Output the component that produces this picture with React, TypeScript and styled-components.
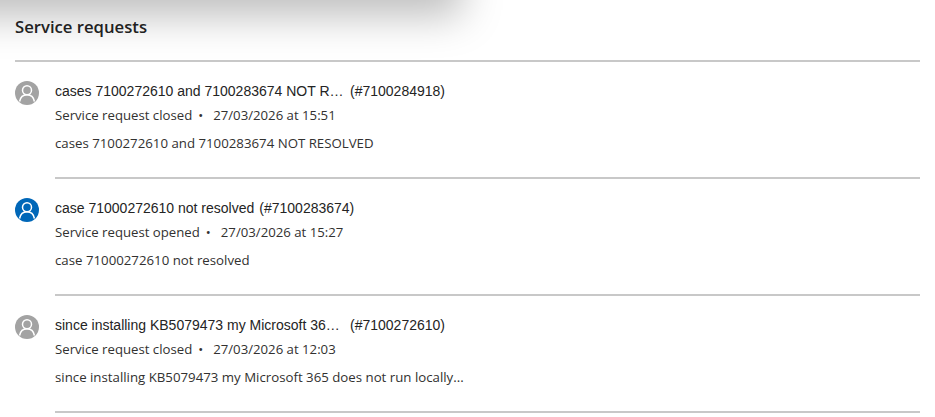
import React from "react";
import styled, { createGlobalStyle } from "styled-components";

interface Request {
  id: string;
  title: string;
  truncated?: boolean;
  status: string;
  date: string;
  body: string;
  active?: boolean;
}

const requests: Request[] = [
  {
    id: "#7100284918",
    title: "cases 7100272610 and 7100283674 NOT R…",
    truncated: true,
    status: "Service request closed",
    date: "27/03/2026 at 15:51",
    body: "cases 7100272610 and 7100283674 NOT RESOLVED",
  },
  {
    id: "#7100283674",
    title: "case 71000272610 not resolved",
    status: "Service request opened",
    date: "27/03/2026 at 15:27",
    body: "case 71000272610 not resolved",
    active: true,
  },
  {
    id: "#7100272610",
    title: "since installing KB5079473 my Microsoft 36…",
    truncated: true,
    status: "Service request closed",
    date: "27/03/2026 at 12:03",
    body: "since installing KB5079473 my Microsoft 365 does not run locally...",
  },
];

const App: React.FC = () => (
  <>
    <GlobalStyle />
    <TopShadow />
    <Page>
      <Title>Service requests</Title>
      <List>
        {requests.map((request) => (
          <Row key={request.id}>
            <Avatar $active={request.active}>
              <svg width="24" height="24" viewBox="0 0 24 24" fill="none" stroke="currentColor" strokeWidth="1.5">
                <circle cx="12" cy="9.2" r="4.5" />
                <path d="M4.6 20.500c.7-3.800 3.500-6.700 7.400-6.700s6.700 2.900 7.400 6.700" />
              </svg>
            </Avatar>
            <Content>
              <RequestTitle>
                <TitleText $truncated={request.truncated}>{request.title}</TitleText>
                <span>({request.id})</span>
              </RequestTitle>
              <Meta>
                <span>{request.status}</span>
                <Dot>•</Dot>
                <span>{request.date}</span>
              </Meta>
              <Body>{request.body}</Body>
            </Content>
          </Row>
        ))}
      </List>
    </Page>
  </>
);

export default App;

const GlobalStyle = createGlobalStyle`
  html, body {
    margin: 0;
    background: #fff;
    overflow: hidden;
  }
`;

const TopShadow = styled.div`
  position: absolute;
  top: -40px;
  left: -60px;
  width: 510px;
  height: 40px;
  box-shadow: 0 4px 40px 12px rgba(0, 0, 0, 0.26);
  pointer-events: none;
`;

const Page = styled.main`
  width: 905px;
  padding: 14px 15px 0;
  font-family: "Open Sans", "Noto Sans", sans-serif;
  color: #323130;
`;

const Title = styled.h2`
  margin: 0;
  box-sizing: border-box;
  border-bottom: 2px solid #c8c8c8;
  height: 48px;
  font-size: 16.7px;
  line-height: 26px;
  font-weight: 600;
  color: #242424;
`;

const List = styled.div`
  display: flex;
  flex-direction: column;
`;

const Row = styled.article`
  display: flex;
  gap: 16px;
  padding-top: 19px;
`;

const Avatar = styled.div<{ $active?: boolean }>`
  flex: none;
  width: 24px;
  height: 24px;
  border-radius: 50%;
  background: ${(p) => (p.$active ? "#0067b8" : "#a3a3a3")};
  color: #fff;
  overflow: hidden;

  svg {
    display: block;
  }
`;

const Content = styled.div`
  flex: 1;
  height: 98px;
  box-sizing: border-box;
  border-bottom: 2px solid #c8c8c8;
  font-size: 13.2px;
`;

const RequestTitle = styled.div`
  display: flex;
  gap: 5px;
  height: 22px;
  line-height: 20px;
  font-family: "Liberation Sans", Arial, sans-serif;
  font-size: 14px;
  color: #242424;
`;

const TitleText = styled.span<{ $truncated?: boolean }>`
  white-space: nowrap;
  width: ${(p) => (p.$truncated ? "290px" : "auto")};
`;

const Meta = styled.div`
  display: flex;
  height: 24px;
  line-height: 24px;
`;

const Dot = styled.span`
  margin: 0 10px 0 6px;
`;

const Body = styled.p`
  margin: 4px 0 0;
  line-height: 24px;
  font-size: 13.25px;
`;
